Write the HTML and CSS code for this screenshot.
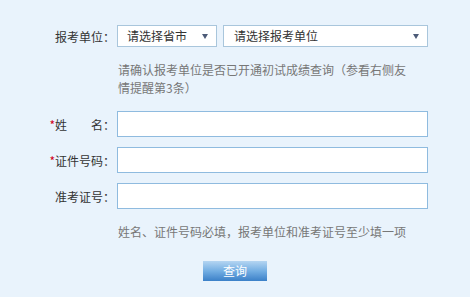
FILE: index.html
```html
<!DOCTYPE html>
<html lang="zh-CN">
<head>
    <meta charset="UTF-8">
    <title>成绩查询</title>
    <link rel="stylesheet" href="styles.css">
</head>
<body>
    <div class="form">
        <div class="row">
            <label class="label">报考单位：</label>
            <div class="field">
                <div class="select short">请选择省市</div>
                <div class="select long">请选择报考单位</div>
            </div>
        </div>
        <p class="tip">请确认报考单位是否已开通初试成绩查询（参看右侧友情提醒第3条）</p>

        <div class="row gap">
            <label class="label"><span class="req">*</span>姓　　名：</label>
            <input class="text" type="text">
        </div>
        <div class="row gap">
            <label class="label"><span class="req">*</span>证件号码：</label>
            <input class="text" type="text">
        </div>
        <div class="row gap">
            <label class="label">准考证号：</label>
            <input class="text" type="text">
        </div>
        <p class="tip note">姓名、证件号码必填，报考单位和准考证号至少填一项</p>

        <div class="actions">
            <button class="btn">查询</button>
        </div>
    </div>
</body>
</html>
```

FILE: styles.css
```css
body {
    margin: 0;
    padding: 0;
    background-color: #e9f3fc;
    font-family: "Noto Sans CJK SC", "DejaVu Sans", sans-serif;
    font-size: 12px;
    color: #333;
}
.form {
    padding-top: 25px;
}
.row {
    display: flex;
    align-items: center;
}
.row.gap {
    margin-top: 10px;
}
.label {
    width: 115px;
    margin-right: 2px;
    text-align: right;
    white-space: nowrap;
}
.req {
    color: #d0021b;
}
.field {
    display: flex;
    gap: 6px;
}
.select {
    position: relative;
    box-sizing: border-box;
    height: 22px;
    line-height: 20px;
    padding-left: 9px;
    background-color: #fff;
    border: 1px solid #a9c6dc;
    color: #333;
}
.select::after {
    content: "";
    position: absolute;
    right: 8px;
    top: 8px;
    border-left: 3px solid transparent;
    border-right: 3px solid transparent;
    border-top: 5px solid #4d5b78;
}
.short {
    width: 100px;
}
.long {
    width: 205px;
    padding-left: 10px;
}
.tip {
    margin: 14px 0 14px 118px;
    width: 296px;
    line-height: 18px;
    color: #777;
}
.note {
    width: 320px;
    margin-bottom: 20px;
}
.text {
    box-sizing: border-box;
    width: 311px;
    height: 26px;
    margin: 0;
    background-color: #fff;
    border: 1px solid #8fbbdf;
    outline: none;
}
.actions {
    display: flex;
    justify-content: center;
}
.btn {
    width: 64px;
    height: 20px;
    padding: 0;
    border: none;
    background: linear-gradient(#b4d5f2, #73aee3 50%, #3b80c8);
    color: #fff;
    font-family: "Noto Sans CJK SC", sans-serif;
    font-size: 12px;
    line-height: 20px;
    cursor: pointer;
}
```
